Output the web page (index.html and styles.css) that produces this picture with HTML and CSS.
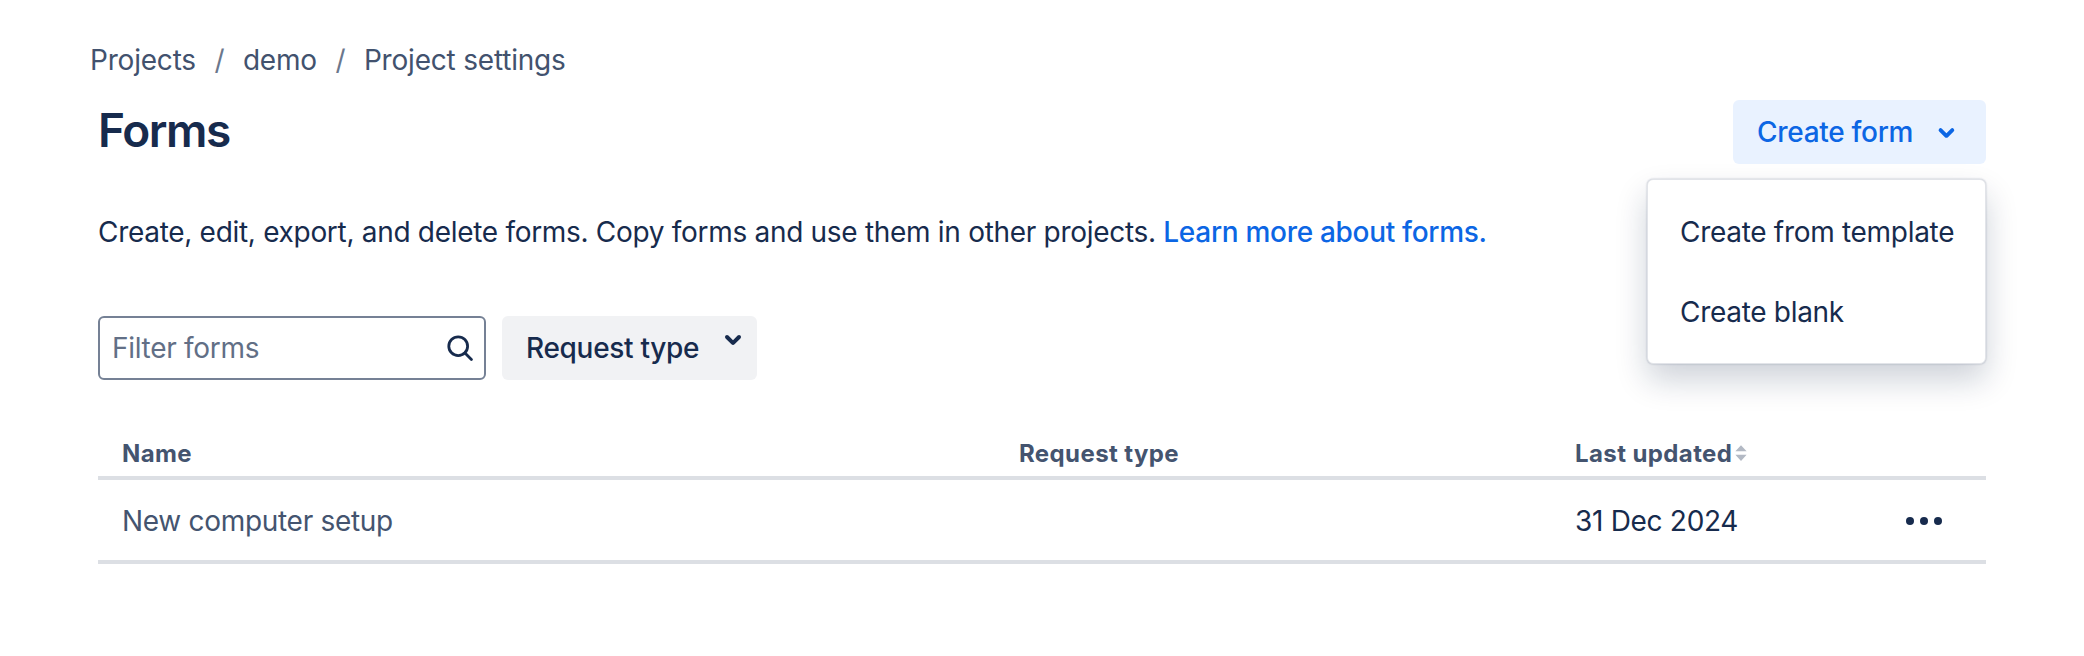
FILE: index.html
```html
<!DOCTYPE html>
<html lang="en">
<head>
<meta charset="utf-8">
<title>Forms</title>
<link rel="stylesheet" href="styles.css">
</head>
<body>
<main class="page">
  <nav class="crumbs">
    <a class="crumb">Projects</a><span class="sep">/</span>
    <a class="crumb">demo</a><span class="sep">/</span>
    <a class="crumb">Project settings</a>
  </nav>
  <header class="head">
    <h1 class="title">Forms</h1>
    <div class="create">
      <button class="create-btn">Create form
        <svg class="chev" viewBox="0 0 24 24" width="48" height="48"><path d="M8.292 10.293a1.009 1.009 0 0 0 0 1.419l2.939 2.965c.218.215.5.322.779.322s.556-.107.769-.322l2.93-2.955a1.01 1.01 0 0 0 0-1.419.987.987 0 0 0-1.406 0l-2.298 2.317-2.307-2.327a.99.99 0 0 0-1.406 0z" fill="currentColor"/></svg>
      </button>
      <div class="menu">
        <div class="menu-item">Create from template</div>
        <div class="menu-item">Create blank</div>
      </div>
    </div>
  </header>
  <p class="desc">Create, edit, export, and delete forms. Copy forms and use them in other projects. <a class="link">Learn more about forms.</a></p>
  <div class="filters">
    <label class="search">
      <span class="placeholder">Filter forms</span>
      <svg class="search-ico" viewBox="0 0 26 26" width="26" height="26"><circle cx="11.2" cy="11.2" r="9.4" fill="none" stroke="currentColor" stroke-width="2.8"/><path d="M18 18l6.4 6.4" stroke="currentColor" stroke-width="2.8" stroke-linecap="round"/></svg>
    </label>
    <button class="type-btn">Request type
      <svg class="chev type-chev" viewBox="0 0 24 24" width="48" height="48"><path d="M8.292 10.293a1.009 1.009 0 0 0 0 1.419l2.939 2.965c.218.215.5.322.779.322s.556-.107.769-.322l2.93-2.955a1.01 1.01 0 0 0 0-1.419.987.987 0 0 0-1.406 0l-2.298 2.317-2.307-2.327a.99.99 0 0 0-1.406 0z" fill="currentColor"/></svg>
    </button>
  </div>
  <div class="table">
    <div class="row row-head">
      <div class="cell">Name</div>
      <div class="cell">Request type</div>
      <div class="cell sorted">Last updated
        <svg class="sort" viewBox="0 0 12 16" width="14" height="18"><path d="M6 1l5 5.5H1zM6 15l-5-5.5h10z" fill="currentColor"/></svg>
      </div>
      <div class="cell"></div>
    </div>
    <div class="row row-body">
      <div class="cell name">New computer setup</div>
      <div class="cell"></div>
      <div class="cell date">31 Dec 2024</div>
      <div class="cell more"><span class="dot"></span><span class="dot"></span><span class="dot"></span></div>
    </div>
  </div>
</main>
</body>
</html>
```
FILE: styles.css
```css
* { box-sizing: border-box; }
html, body { margin: 0; background: #fff; }
body { font-family: Inter, "Noto Sans", sans-serif; font-size: 28px; letter-spacing: -0.3px; color: #172b4d; }
.page { padding: 40px 98px 0; width: 2084px; height: 656px; overflow: hidden; }
.crumbs { display: flex; align-items: center; height: 40px; margin-left: -8px; color: #42526e; letter-spacing: -0.2px; }
.crumb { line-height: 40px; }
.sep { width: 47px; text-align: center; color: #6b778c; }
.head { display: flex; justify-content: space-between; align-items: center; height: 64px; margin-top: 20px; }
.title { margin: -5px 0 0; font-size: 46px; font-weight: 600; line-height: 64px; letter-spacing: -1.4px; }
.create { position: relative; }
.create-btn { display: flex; align-items: center; gap: 10px; height: 64px; width: 253px; padding: 0 16px 0 24px; border: 0; border-radius: 6px; background: #e9f2ff; color: #0c66e4; font: 500 28px Inter, sans-serif; letter-spacing: -0.3px; white-space: nowrap; }
.menu { position: absolute; top: 79px; right: 0; width: 339px; height: 185px; padding: 12px 0; background: #fff; border: 1px solid #e2e4e9; border-radius: 6px; box-shadow: 0 16px 32px rgba(9,30,66,.2), 0 0 2px rgba(9,30,66,.31); }
.menu-item { height: 80px; line-height: 80px; padding-left: 32px; white-space: nowrap; }
.desc { margin: 48px 0 0; line-height: 40px; white-space: nowrap; }
.link { color: #0c66e4; font-weight: 500; }
.filters { display: flex; gap: 16px; margin-top: 64px; }
.search { display: flex; align-items: center; justify-content: space-between; width: 388px; height: 64px; padding: 0 11px 0 12px; border: 2px solid #758195; border-radius: 6px; }
.placeholder { color: #626f86; }
.search-ico { color: #172b4d; }
.type-btn { display: flex; align-items: center; gap: 10px; height: 64px; padding: 0 0 0 24px; border: 0; border-radius: 6px; background: #f1f2f4; color: #172b4d; font: 500 28px Inter, sans-serif; letter-spacing: -0.3px; white-space: nowrap; }
.type-chev { position: relative; top: -9px; }
.table { margin-top: 48px; }
.row { display: grid; grid-template-columns: 897px 556px 1fr 80px; }
.cell { padding-left: 24px; }
.row-head { height: 52px; padding-top: 2px; border-bottom: 4px solid #dcdfe4; align-items: center; color: #44546f; font-size: 24px; font-weight: 700; letter-spacing: 0.4px; }
.sorted { display: flex; align-items: center; gap: 2px; }
.sort { color: #b3b9c4; }
.row-body { height: 84px; padding-top: 2px; border-bottom: 4px solid #dcdfe4; align-items: center; }
.name { color: #44546f; }
.more { display: flex; gap: 6px; padding-left: 0; }
.dot { width: 8px; height: 8px; border-radius: 50%; background: #172b4d; }
```
